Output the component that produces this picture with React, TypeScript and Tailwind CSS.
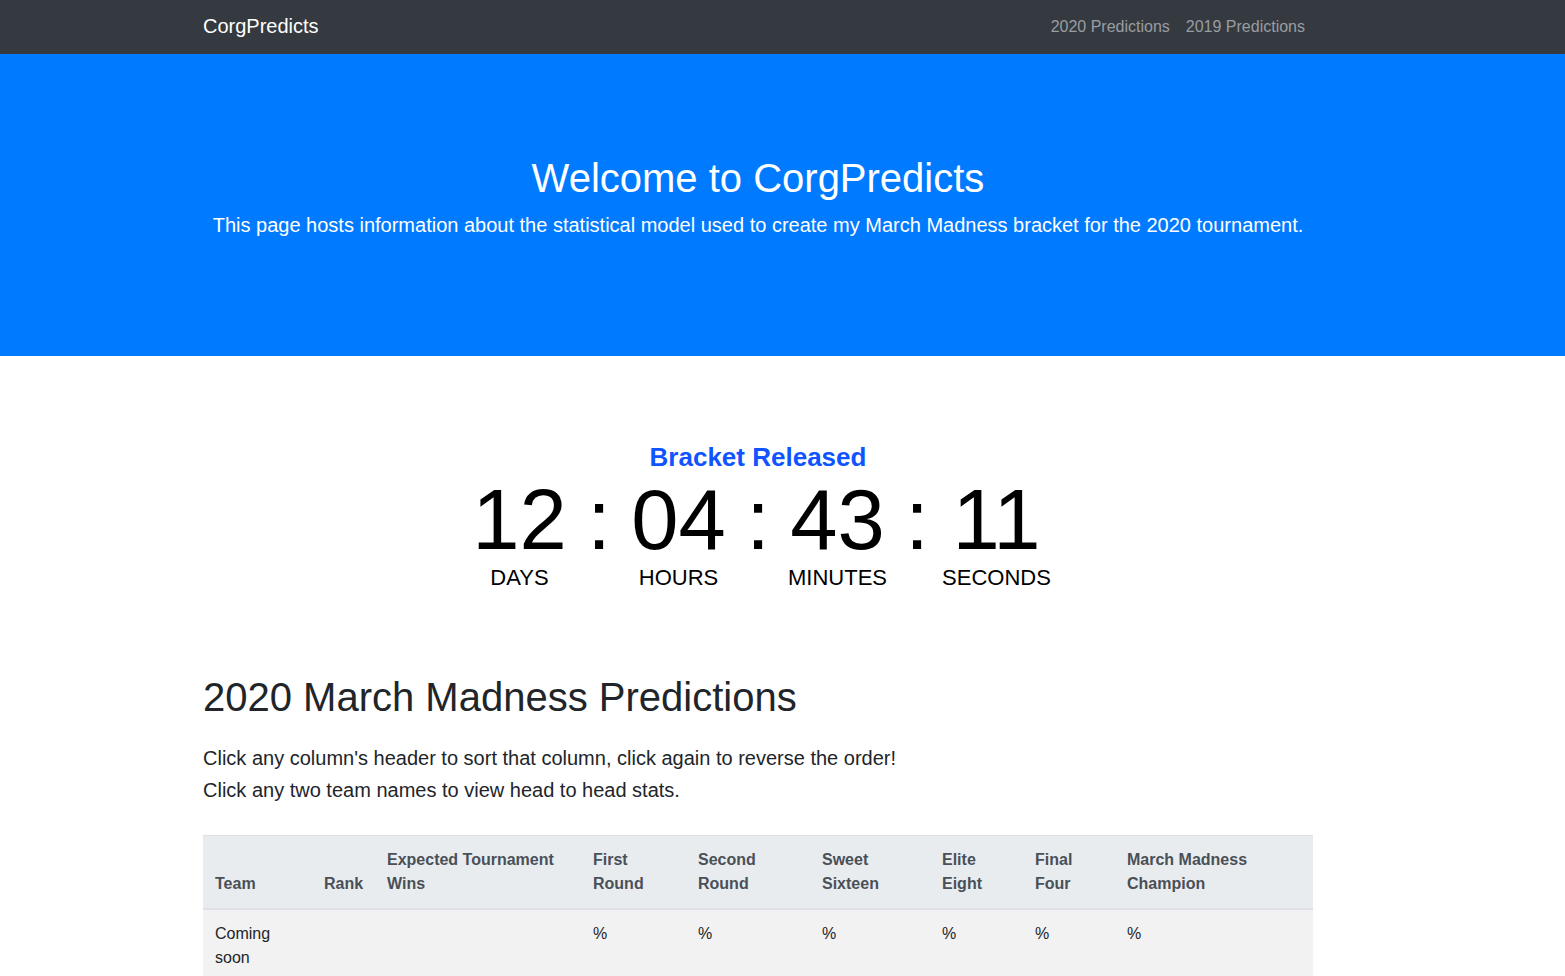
import React from "react";

const units = [
  { v: "12", l: "DAYS" },
  { v: "04", l: "HOURS" },
  { v: "43", l: "MINUTES" },
  { v: "11", l: "SECONDS" },
];

const headers: { a?: string; b: string; w: string }[] = [
  { b: "Team", w: "w-[109px]" },
  { b: "Rank", w: "w-[63px]" },
  { a: "Expected Tournament", b: "Wins", w: "w-[206px]" },
  { a: "First", b: "Round", w: "w-[105px]" },
  { a: "Second", b: "Round", w: "w-[124px]" },
  { a: "Sweet", b: "Sixteen", w: "w-[120px]" },
  { a: "Elite", b: "Eight", w: "w-[93px]" },
  { a: "Final", b: "Four", w: "w-[92px]" },
  { a: "March Madness", b: "Champion", w: "w-[198px]" },
];

export default function App() {
  return (
    <div className="min-h-screen bg-white font-['Liberation_Sans',Arial,sans-serif] text-[#212529]">
      {/* Navbar */}
      <nav className="h-[54px] bg-[#343a40]">
        <div className="ml-[203px] flex h-full w-[1110px] items-center justify-between pb-[2px]">
          <span className="text-[20px] leading-[30px] text-white">CorgPredicts</span>
          <div className="flex pt-[2px] text-[16px] leading-[24px] text-[#9a9da0]">
            <span className="px-2">2020 Predictions</span>
            <span className="px-2">2019 Predictions</span>
          </div>
        </div>
      </nav>

      {/* Jumbotron */}
      <section className="bg-[#007bff] pt-[100px] pb-[116px]">
        <div className="ml-[203px] w-[1110px] text-center text-white">
          <h1 className="text-[40px] leading-[48px] font-normal">Welcome to CorgPredicts</h1>
          <p className="mt-2 text-[20px] leading-[30px] font-normal">
            This page hosts information about the statistical model used to create my March Madness bracket for the 2020 tournament.
          </p>
        </div>
      </section>

      {/* Countdown */}
      <div className="ml-[203px] w-[1110px]">
        <div className="mt-[86px] text-center text-[26px] leading-[31px] font-bold text-[#1054ff]">
          Bracket Released
        </div>
        <div className="mt-[5px] flex justify-center text-black">
          {units.map((u, i) => (
            <React.Fragment key={u.l}>
              {i > 0 && (
                <div className="w-[39px] text-center text-[85px] leading-[84px]">:</div>
              )}
              <div className="flex w-[120px] flex-col items-center">
                <div className="text-[85px] leading-[84px]">{u.v}</div>
                <div className="mt-[3px] text-[22px] leading-[26px]">{u.l}</div>
              </div>
            </React.Fragment>
          ))}
        </div>

        {/* Predictions */}
        <h2 className="mt-[82px] text-[40px] leading-[48px] font-normal text-[#212529]">
          2020 March Madness Predictions
        </h2>
        <div className="mt-[21px] text-[20px] leading-[32px]">
          <p>Click any column's header to sort that column, click again to reverse the order!</p>
          <p>Click any two team names to view head to head stats.</p>
        </div>

        <table className="mt-[29px] w-[1110px] table-fixed border-collapse text-[16px] leading-[24px]">
          <thead>
            <tr className="bg-[#e9ecef] text-[#495057]">
              {headers.map((h) => (
                <th
                  key={h.b + (h.a ?? "")}
                  className={`${h.w} border-t border-b-2 border-[#dee2e6] p-3 text-left align-bottom font-bold`}
                >
                  {h.a && <div>{h.a}</div>}
                  <div>{h.b}</div>
                </th>
              ))}
            </tr>
          </thead>
          <tbody>
            <tr className="bg-[#f2f2f2] text-[#212529]">
              <td className="border-t border-[#dee2e6] p-3 align-top">
                Coming
                <br />
                soon
              </td>
              <td className="border-t border-[#dee2e6] p-3 align-top"></td>
              <td className="border-t border-[#dee2e6] p-3 align-top"></td>
              <td className="border-t border-[#dee2e6] p-3 align-top">%</td>
              <td className="border-t border-[#dee2e6] p-3 align-top">%</td>
              <td className="border-t border-[#dee2e6] p-3 align-top">%</td>
              <td className="border-t border-[#dee2e6] p-3 align-top">%</td>
              <td className="border-t border-[#dee2e6] p-3 align-top">%</td>
              <td className="border-t border-[#dee2e6] p-3 align-top">%</td>
            </tr>
          </tbody>
        </table>
      </div>
    </div>
  );
}
